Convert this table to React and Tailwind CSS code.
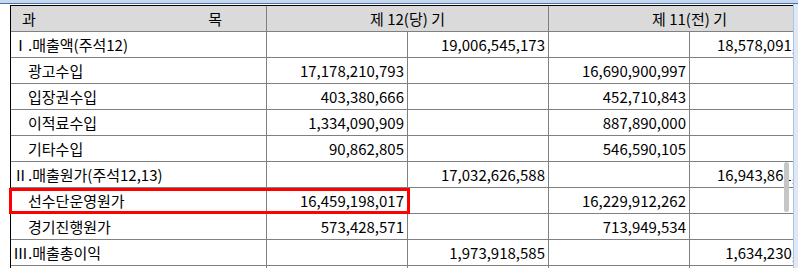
const rows = [
  { name: "Ⅰ.매출액(주석12)", sub: false, v: ["", "19,006,545,173", "", "18,578,091,945"] },
  { name: "광고수입", sub: true, v: ["17,178,210,793", "", "16,690,900,997", ""] },
  { name: "입장권수입", sub: true, v: ["403,380,666", "", "452,710,843", ""] },
  { name: "이적료수입", sub: true, v: ["1,334,090,909", "", "887,890,000", ""] },
  { name: "기타수입", sub: true, v: ["90,862,805", "", "546,590,105", ""] },
  { name: "Ⅱ.매출원가(주석12,13)", sub: false, v: ["", "17,032,626,588", "", "16,943,861,796"] },
  { name: "선수단운영원가", sub: true, v: ["16,459,198,017", "", "16,229,912,262", ""] },
  { name: "경기진행원가", sub: true, v: ["573,428,571", "", "713,949,534", ""] },
  { name: "Ⅲ.매출총이익", sub: false, v: ["", "1,973,918,585", "", "1,634,230,149"] },
  { name: "", sub: false, v: ["", "", "", ""] },
];

const App = () => {
  return (
    <div
      className="w-[798px] h-[268px] overflow-hidden bg-white flex flex-col text-black"
      style={{ fontFamily: '"Noto Sans CJK KR", "Noto Sans", sans-serif' }}
    >
      <div className="h-[3px] shrink-0 bg-[#c7d7ec]"></div>
      <div className="h-[1px] shrink-0 bg-[#4a72aa]"></div>
      <div className="flex flex-1 min-h-0">
        <div className="relative w-[793px] overflow-hidden pt-[1px] pl-[10px]">
          <div className="w-[963px] border-t border-l border-black text-[15px]">
            {/* header */}
            <div className="flex h-[26px] bg-[#dadada]">
              <div className="w-[256px] shrink-0 flex justify-between pl-[11px] pr-[44px] leading-[25px] border-r border-b border-[#808080]">
                <span>과</span>
                <span>목</span>
              </div>
              <div className="w-[282px] shrink-0 text-center leading-[25px] border-r border-b border-[#808080]">
                제 12(당) 기
              </div>
              <div className="w-[282px] shrink-0 text-center leading-[25px] border-r border-b border-[#808080]">
                제 11(전) 기
              </div>
            </div>
            {rows.map((r, i) => (
              <div key={i} className="flex h-[26px]">
                <div
                  className={
                    r.sub
                      ? "w-[256px] shrink-0 pl-[17px] leading-[25px] whitespace-nowrap border-r border-b border-[#808080]"
                      : "w-[256px] shrink-0 pl-[2px] leading-[25px] whitespace-nowrap border-r border-b border-[#808080]"
                  }
                >
                  {r.name}
                </div>
                {r.v.map((val, j) => (
                  <div
                    key={j}
                    className={
                      j === 3
                        ? "w-[141px] shrink-0 text-right pr-[9px] leading-[25px] whitespace-nowrap border-r border-b border-[#808080]"
                        : "w-[141px] shrink-0 text-right pr-[3px] leading-[25px] whitespace-nowrap border-r border-b border-[#808080]"
                    }
                  >
                    {val}
                  </div>
                ))}
              </div>
            ))}
          </div>
          {/* highlight box */}
          <div className="absolute left-[9px] top-[184px] w-[401px] h-[26px] border-[3px] border-[#ff0000]"></div>
          {/* scrollbar thumb */}
          <div className="absolute left-[784px] top-[158px] w-[5px] h-[50px] rounded-full bg-[#c6c6c6]"></div>
        </div>
        <div className="flex-1 border-l border-[#a9c5ea] bg-[#dfe8f4]"></div>
      </div>
    </div>
  );
};

export default App;
